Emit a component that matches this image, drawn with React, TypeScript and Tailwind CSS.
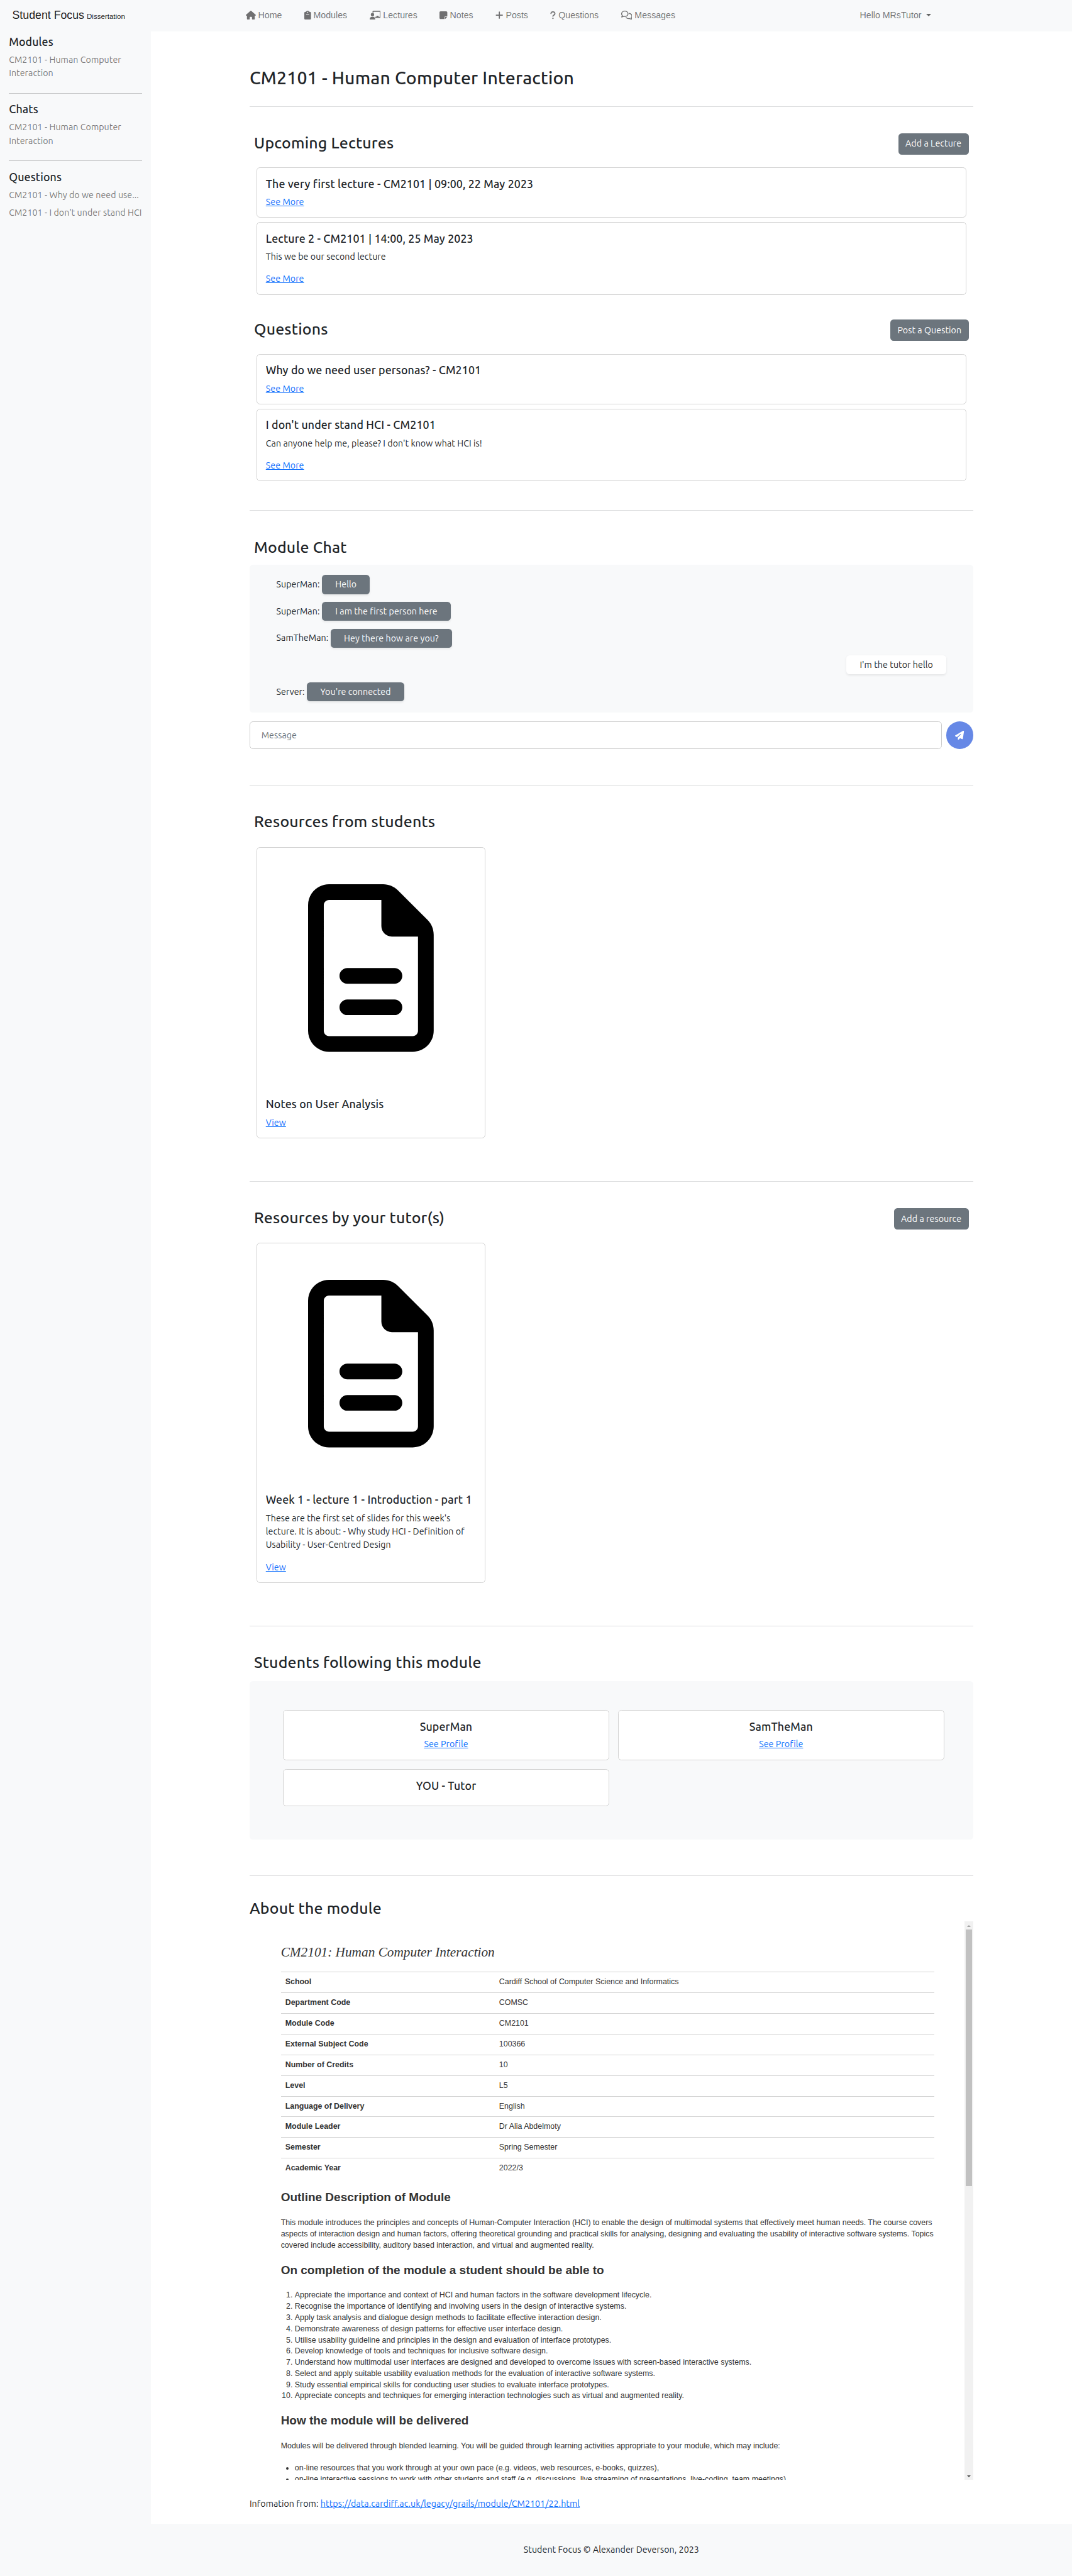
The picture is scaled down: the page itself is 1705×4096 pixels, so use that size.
import type { ReactNode } from "react";
import {
  FaChalkboardUser,
  FaClipboard,
  FaHouse,
  FaNoteSticky,
  FaPaperPlane,
  FaPlus,
  FaQuestion,
  FaRegComments,
  FaRegFileLines,
} from "react-icons/fa6";

const navItems: { label: string; icon: ReactNode }[] = [
  { label: "Home", icon: <FaHouse className="mb-0.5 h-4 w-[18px]" /> },
  { label: "Modules", icon: <FaClipboard className="mb-0.5 h-4 w-3" /> },
  { label: "Lectures", icon: <FaChalkboardUser className="mb-0.5 h-4 w-5" /> },
  { label: "Notes", icon: <FaNoteSticky className="mb-0.5 h-4 w-3.5" /> },
  { label: "Posts", icon: <FaPlus className="mb-0.5 h-4 w-3.5" /> },
  { label: "Questions", icon: <FaQuestion className="mb-0.5 h-4 w-2.5" /> },
  { label: "Messages", icon: <FaRegComments className="mb-0.5 h-4 w-5" /> },
];

const facts = [
  ["School", "Cardiff School of Computer Science and Informatics"],
  ["Department Code", "COMSC"],
  ["Module Code", "CM2101"],
  ["External Subject Code", "100366"],
  ["Number of Credits", "10"],
  ["Level", "L5"],
  ["Language of Delivery", "English"],
  ["Module Leader", "Dr Alia Abdelmoty"],
  ["Semester", "Spring Semester"],
  ["Academic Year", "2022/3"],
];

const outcomes = [
  "Appreciate the importance and context of HCI and human factors in the software development lifecycle.",
  "Recognise the importance of identifying and involving users in the design of interactive systems.",
  "Apply task analysis and dialogue design methods to facilitate effective interaction design.",
  "Demonstrate awareness of design patterns for effective user interface design.",
  "Utilise usability guideline and principles in the design and evaluation of interface prototypes.",
  "Develop knowledge of tools and techniques for inclusive software design.",
  "Understand how multimodal user interfaces are designed and developed to overcome issues with screen-based interactive systems.",
  "Select and apply suitable usability evaluation methods for the evaluation of interactive software systems.",
  "Study essential empirical skills for conducting user studies to evaluate interface prototypes.",
  "Appreciate concepts and techniques for emerging interaction technologies such as virtual and augmented reality.",
];

function Navbar() {
  return (
    <header className="flex h-14 items-center bg-[#f8f9fa] font-['Liberation_Sans',Arial,sans-serif] text-base tracking-normal text-black/55">
      <a className="w-[418px] pl-[22px] text-[20px] leading-[30px] whitespace-nowrap text-black/90">
        Student Focus <span className="-ml-px text-[13px]">Dissertation</span>
      </a>
      <nav className="ml-[22px] flex w-[1100px] gap-10">
        {navItems.map((item) => (
          <a key={item.label} className="flex items-center gap-[4.4px] whitespace-nowrap">
            {item.icon}
            {item.label}
          </a>
        ))}
      </nav>
      <div className="flex items-center gap-2 whitespace-nowrap">
        Hello MRsTutor
        <span className="-mt-0.5 border-x-[5px] border-t-[5px] border-x-transparent border-t-black/60" />
      </div>
    </header>
  );
}

function SideSection({ title, items, last }: { title: string; items: string[]; last?: boolean }) {
  return (
    <section>
      <h5 className="h-6 pt-px text-[20px] leading-6 font-medium tracking-[0.007em]">{title}</h5>
      <div className="mt-[9.5px] flex flex-col gap-2 text-black/55">
        {items.map((item) => (
          <a key={item} className={last ? "whitespace-nowrap" : ""}>
            {item}
          </a>
        ))}
      </div>
      {!last && <hr className="mt-[22.7px] mb-[15.7px] border-[#c3c4c5]" />}
    </section>
  );
}

function Sidebar() {
  return (
    <aside className="w-[270px] shrink-0 bg-[#f8f9fa] px-4 pt-[6px]">
      <SideSection title="Modules" items={["CM2101 - Human Computer Interaction"]} />
      <SideSection title="Chats" items={["CM2101 - Human Computer Interaction"]} />
      <SideSection
        last
        title="Questions"
        items={["CM2101 - Why do we need use...", "CM2101 - I don't under stand HCI"]}
      />
    </aside>
  );
}

function Link({ children }: { children: ReactNode }) {
  return <a className="self-start text-[#0d6efd] underline">{children}</a>;
}

function Rule() {
  return <hr className="h-px border-t border-[#dadbdc]" />;
}

function SectionHead({ title, action }: { title: string; action?: string }) {
  return (
    <div className="flex items-start justify-between px-2">
      <h3 className="h-[33.6px] pt-[1.4px] text-[28px] leading-[33.6px] font-medium tracking-[0.008em]">{title}</h3>
      {action && (
        <button className="h-[38px] rounded-md bg-[#6c757d] px-[13px] pt-px leading-6 whitespace-nowrap text-white">
          {action}
        </button>
      )}
    </div>
  );
}

function PostCard({ title, text }: { title: string; text?: string }) {
  return (
    <article
      className={
        text
          ? "flex h-[130px] flex-col rounded-md border border-[#d2d2d2] bg-white p-4"
          : "flex h-[90px] flex-col rounded-md border border-[#d2d2d2] bg-white p-4"
      }
    >
      <h5 className="mb-[9px] text-[20px] leading-6 font-medium tracking-[0.007em]">{title}</h5>
      {text && <p className="mb-4">{text}</p>}
      <Link>See More</Link>
    </article>
  );
}

function ResourceCard({ title, text }: { title: string; text?: string }) {
  return (
    <article className="mx-3 flex w-[410px] flex-col rounded-md border border-[#d2d2d2] bg-white px-4 pb-[15px]">
      <div className="flex h-[431.6px] items-center justify-center">
        <FaRegFileLines className="h-[300px] w-[225px] text-black" />
      </div>
      <h5 className="mt-4 mb-[9px] text-[20px] leading-6 font-medium tracking-[0.007em] whitespace-nowrap">{title}</h5>
      {text && <p className="mb-4">{text}</p>}
      <Link>View</Link>
    </article>
  );
}

function ChatLine({ from, text }: { from?: string; text: string }) {
  return (
    <div className={from ? "flex items-center gap-1" : "flex items-center justify-end"}>
      {from && <span className="pt-px">{from}:</span>}
      <span
        className={
          from
            ? "h-[34px] rounded-md bg-[#6c757d] px-6 leading-[35px] text-white shadow-[0_2px_4px_rgba(0,0,0,0.075)]"
            : "h-[34px] rounded-md bg-white px-6 leading-[35px] shadow-[0_2px_4px_rgba(0,0,0,0.075)]"
        }
      >
        {text}
      </span>
    </div>
  );
}

function StudentCard({ name, you }: { name: string; you?: boolean }) {
  return (
    <div
      className={
        you
          ? "flex h-[66px] flex-col items-center rounded-md border border-[#d2d2d2] bg-white pt-[17px]"
          : "flex h-[90px] flex-col items-center rounded-md border border-[#d2d2d2] bg-white pt-[17px]"
      }
    >
      <h5 className="mb-2 text-[20px] leading-6 font-medium tracking-[0.007em]">{name}</h5>
      {!you && <a className="text-[#0d6efd] underline">See Profile</a>}
    </div>
  );
}

function DocHeading({ children }: { children: ReactNode }) {
  return <h4 className="mt-[19.4px] mb-[20.6px] h-[30px] text-[21.4px] leading-[30px] font-bold">{children}</h4>;
}

function ModuleDocument() {
  return (
    <div className="mt-2 flex h-[1000px] overflow-hidden">
      <div className="flex-1 pt-[37.4px] pr-[55px] pl-14 font-['Liberation_Sans',Arial,sans-serif] text-[14px] leading-5 tracking-normal text-[#333]">
        <h2 className="h-9 pt-px font-['Liberation_Serif','Times_New_Roman',serif] text-[24px] leading-9 italic">
          CM2101: Human Computer Interaction
        </h2>
        <dl className="mt-[17px]">
          {facts.map(([label, value]) => (
            <div key={label} className="flex h-[37px] items-center border-t border-[#d3d3d3] px-2">
              <dt className="w-[383px] font-bold">{label}</dt>
              <dd>{value}</dd>
            </div>
          ))}
        </dl>
        <DocHeading>Outline Description of Module</DocHeading>
        <p className="-mr-2 whitespace-nowrap">
          This module introduces the principles and concepts of Human-Computer Interaction (HCI) to enable the design of
          multimodal systems that effectively meet human needs. The course covers
          <br />
          aspects of interaction design and human factors, offering theoretical grounding and practical skills for
          analysing, designing and evaluating the usability of interactive software systems. Topics
          <br />
          covered include accessibility, auditory based interaction, and virtual and augmented reality.
        </p>
        <DocHeading>On completion of the module a student should be able to</DocHeading>
        <ol className="list-decimal pl-[25px]">
          {outcomes.map((outcome) => (
            <li key={outcome}>{outcome}</li>
          ))}
        </ol>
        <DocHeading>How the module will be delivered</DocHeading>
        <p>
          Modules will be delivered through blended learning. You will be guided through learning activities appropriate
          to your module, which may include:
        </p>
        <ul className="mt-[19.5px] list-disc pl-[25px]">
          <li>on-line resources that you work through at your own pace (e.g. videos, web resources, e-books, quizzes),</li>
          <li>
            on-line interactive sessions to work with other students and staff (e.g. discussions, live streaming of
            presentations, live-coding, team meetings)
          </li>
        </ul>
      </div>
      <div className="flex w-[15px] flex-col items-center justify-between bg-[#f1f1f1]">
        <div className="flex w-full flex-col items-center">
          <span className="mt-[6px] mb-[5px] border-x-[3.5px] border-b-[4px] border-x-transparent border-b-[#a3a3a3]" />
          <span className="h-[459px] w-[11px] bg-[#c1c1c1]" />
        </div>
        <span className="mb-[5px] border-x-[3.5px] border-t-[4px] border-x-transparent border-t-[#505050]" />
      </div>
    </div>
  );
}

function Main() {
  return (
    <main className="ml-[177px] w-[1296px]">
      <h2 className="mt-[62.8px] h-[38.4px] pt-[1.4px] text-[32px] leading-[38.4px] font-medium tracking-[0.008em]">
        CM2101 - Human Computer Interaction
      </h2>
      <div className="mt-[32.8px]">
        <Rule />
      </div>

      <section className="mt-[47.4px]">
        <SectionHead title="Upcoming Lectures" action="Add a Lecture" />
        <div className="mx-3 mt-[23.6px] flex flex-col gap-2">
          <PostCard title="The very first lecture - CM2101 | 09:00, 22 May 2023" />
          <PostCard title="Lecture 2 - CM2101 | 14:00, 25 May 2023" text="This we be our second lecture" />
        </div>
      </section>

      <section className="mt-[44px]">
        <SectionHead title="Questions" action="Post a Question" />
        <div className="mx-3 mt-[24px] flex flex-col gap-2">
          <PostCard title="Why do we need user personas? - CM2101" />
          <PostCard title="I don't under stand HCI - CM2101" text="Can anyone help me, please? I don't know what HCI is!" />
        </div>
      </section>

      <div className="mt-[51.6px]">
        <Rule />
      </div>

      <section className="mt-[47.4px]">
        <SectionHead title="Module Chat" />
        <div className="mt-4 flex h-[264px] flex-col gap-3.5 rounded-md bg-[#f8f9fa] px-12 pt-[18px]">
          <ChatLine from="SuperMan" text="Hello" />
          <ChatLine from="SuperMan" text="I am the first person here" />
          <ChatLine from="SamTheMan" text="Hey there how are you?" />
          <ChatLine text="I'm the tutor hello" />
          <ChatLine from="Server" text="You're connected" />
        </div>
        <div className="mt-4 flex h-[50px] gap-2">
          <div className="flex flex-1 items-center rounded-md border border-[#ccc] pt-px pl-5 text-[#6c757d]">
            Message
          </div>
          <button className="flex w-12 items-center justify-center rounded-full bg-[#6688e6] text-white">
            <FaPaperPlane className="h-4 w-4" />
          </button>
        </div>
      </section>

      <div className="mt-[63.6px]">
        <Rule />
      </div>

      <section className="mt-[47.4px]">
        <SectionHead title="Resources from students" />
        <div className="mt-[29.4px] h-[521px]">
          <ResourceCard title="Notes on User Analysis" />
        </div>
      </section>

      <div className="mt-[77px]">
        <Rule />
      </div>

      <section className="mt-[47.4px]">
        <SectionHead title="Resources by your tutor(s)" action="Add a resource" />
        <div className="mt-6 h-[609px]">
          <ResourceCard
            title="Week 1 - lecture 1 - Introduction - part 1"
            text="These are the first set of slides for this week's lecture. It is about: - Why study HCI - Definition of Usability - User-Centred Design"
          />
        </div>
      </section>

      <div className="mt-[76.4px]">
        <Rule />
      </div>

      <section className="mt-[47.8px]">
        <SectionHead title="Students following this module" />
        <div className="mt-[16.8px] grid h-[284px] grid-cols-2 content-start gap-4 rounded-md bg-[#f8f9fa] pt-[52px] pr-[52px] pl-[60px]">
          <StudentCard name="SuperMan" />
          <StudentCard name="SamTheMan" />
          <StudentCard name="YOU - Tutor" you />
        </div>
      </section>

      <div className="mt-[64px]">
        <Rule />
      </div>

      <section className="mt-[40px]">
        <h3 className="h-[33.6px] pt-[1.4px] text-[28px] leading-[33.6px] font-medium tracking-[0.008em]">
          About the module
        </h3>
        <ModuleDocument />
        <p className="mt-[31px]">
          Infomation from: <Link>https://data.cardiff.ac.uk/legacy/grails/module/CM2101/22.html</Link>
        </p>
      </section>
    </main>
  );
}

export default function App() {
  return (
    <div className="h-[4096px] w-[1705px] overflow-hidden bg-[#f8f9fa]">
      <div className="w-[1921px] bg-white font-[Ubuntu,'Noto_Sans',sans-serif] text-base leading-6 tracking-[0.005em] text-[#212529] [zoom:0.888]">
        <Navbar />
        <div className="flex h-[4463px]">
          <Sidebar />
          <Main />
        </div>
        <footer className="flex h-[95px] justify-center bg-[#f8f9fa] pt-[35px] pl-[269px]">
          <span>Student Focus © Alexander Deverson, 2023</span>
        </footer>
      </div>
    </div>
  );
}
